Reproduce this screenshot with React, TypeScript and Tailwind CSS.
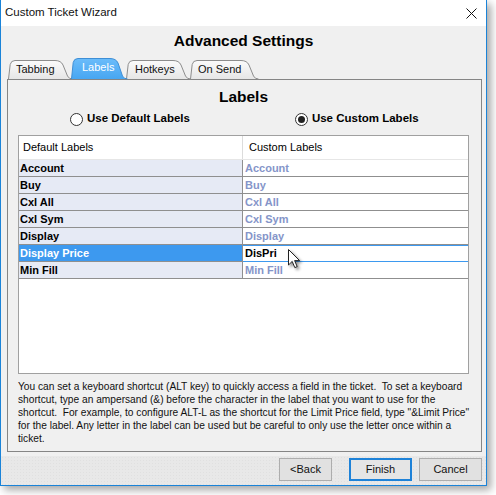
import React from "react";

type Row = { name: string; custom: string; selected?: boolean };

const rows: Row[] = [
  { name: "Account", custom: "Account" },
  { name: "Buy", custom: "Buy" },
  { name: "Cxl All", custom: "Cxl All" },
  { name: "Cxl Sym", custom: "Cxl Sym" },
  { name: "Display", custom: "Display" },
  { name: "Display Price", custom: "DisPri", selected: true },
  { name: "Min Fill", custom: "Min Fill" },
];

function Tab({ id, label, width, selected, pl, className = "" }: { id: string; label: string; width: number; selected?: boolean; pl: number; className?: string }) {
  const h = selected ? 21 : 19;
  const w = width;
  const d = `M0.5,${h} L2.2,4.5 Q3,0.5 7,0.5 L${w - 17},0.5 Q${w - 11},0.5 ${w - 9},5 L${w - 4.5},${h - 3} Q${w - 3},${h} ${w + 0.5},${h}`;
  return (
    <div className={`relative shrink-0 ${selected ? "z-10 h-[21px]" : "h-[19px]"} ${className}`} style={{ width: w }}>
      <svg className="absolute inset-0 overflow-visible" width={w} height={h}>
        <defs>
          <linearGradient id={`tabfill-${id}`} x1="0" y1="0" x2="0" y2="1">
            <stop offset="0" stopColor={selected ? "#6bbcfa" : "#fbfbfb"} />
            <stop offset="1" stopColor={selected ? "#47a6f2" : "#e6e6e6"} />
          </linearGradient>
        </defs>
        <path d={d} fill={`url(#tabfill-${id})`} stroke={selected ? "#3f8fd6" : "#8d8d8d"} strokeWidth="1" />
      </svg>
      <span
        className={`relative block text-[11px] leading-none ${selected ? "pt-[4px] text-white" : "pt-[4px] text-[#111]"}`}
        style={{ paddingLeft: pl }}
      >
        {label}
      </span>
    </div>
  );
}

function Radio({ checked }: { checked?: boolean }) {
  return (
    <span className="flex h-[13px] w-[13px] items-center justify-center rounded-full border border-[#333] bg-white">
      {checked ? <span className="h-[7px] w-[7px] rounded-full bg-[#222]" /> : null}
    </span>
  );
}

export default function App() {
  return (
    <div className="h-[495px] w-[496px] bg-white font-['Liberation_Sans',Arial,sans-serif] text-black">
      <div className="flex h-[486px] w-[487px] flex-col border-x border-b border-[#1a83d8] bg-[#f0f0f0] shadow-[4px_4px_8px_rgba(0,0,0,0.35)]">
        {/* title bar */}
        <div className="flex h-[26px] items-center justify-between bg-white pl-[4px] pr-[8px]">
          <span className="text-[11.5px] text-[#111]">Custom Ticket Wizard</span>
          <svg width="11" height="11" viewBox="0 0 11 11" className="mr-[1px]">
            <path d="M0.5 0.5 L10.5 10.5 M10.5 0.5 L0.5 10.5" stroke="#111" strokeWidth="1" />
          </svg>
        </div>

        <div className="flex h-[32px] items-center justify-center pb-[3px] text-[15.5px] font-bold">Advanced Settings</div>

        {/* tabs */}
        <div className="flex h-[21px] items-end pl-[7px]">
          <Tab id="tabbing" label="Tabbing" width={64} pl={8} />
          <Tab id="labels" label="Labels" width={56} pl={11} selected className="ml-[-1px]" />
          <Tab id="hotkeys" label="Hotkeys" width={64} pl={9} className="ml-[-1px]" />
          <Tab id="onsend" label="On Send" width={68} pl={8} />
        </div>

        {/* panel */}
        <div className="ml-[6px] flex h-[373px] w-[475px] flex-col border border-[#858585] pl-[10px] pr-[12px]">
          <div className="flex h-[24px] items-end justify-center text-[15.5px] font-bold leading-none">Labels</div>
          <div className="mt-[4px] flex h-[22px] items-center text-[11.5px] font-bold">
            <div className="ml-[52px] flex items-center gap-[4px]">
              <Radio />
              <span>Use Default Labels</span>
            </div>
            <div className="ml-[105px] flex items-center gap-[4px]">
              <Radio checked />
              <span>Use Custom Labels</span>
            </div>
          </div>

          {/* table */}
          <div className="relative mt-[5px] h-[239px] w-[451px] border border-[#a0a0a0] bg-white">
            <div className="flex h-[24px] border-b border-[#e6e6e6] text-[11px]">
              <div className="flex w-[224px] items-center border-r border-[#dcdcdc] pl-[4px]">Default Labels</div>
              <div className="flex flex-1 items-center pl-[6px]">Custom Labels</div>
            </div>
            {rows.map((r) => (
              <div key={r.name} className="flex h-[17px] text-[11px] font-bold leading-[16px]">
                <div
                  className={`w-[224px] border-r border-b border-[#8f8f8f] pl-[1px] ${
                    r.selected ? "bg-[#3d99ef] text-white" : "bg-[#e6eaf5] text-black"
                  }`}
                >
                  {r.name}
                </div>
                <div
                  className={`flex-1 border-b pl-[2px] ${
                    r.selected
                      ? "border-[#3d99ef] text-black shadow-[inset_0_1px_0_#3d99ef]"
                      : "border-[#8f8f8f] text-[#8595c9]"
                  }`}
                >
                  {r.custom}
                </div>
              </div>
            ))}
            {/* mouse pointer */}
            <svg
              className="absolute left-[269px] top-[113px] drop-shadow-[2px_2px_1.5px_rgba(0,0,0,0.45)]"
              width="14"
              height="21"
              viewBox="0 0 14 21"
            >
              <path d="M0.5 0.5 L0.5 16 L4.2 12.4 L6.8 18.6 L9.2 17.6 L6.6 11.6 L11.6 11.6 Z" fill="#fff" stroke="#222" strokeWidth="1" strokeLinejoin="round" />
            </svg>
          </div>

          <div className="mt-[6px] text-[10.2px] leading-[13px] text-[#111]">
            <div className="whitespace-nowrap">You can set a keyboard shortcut (ALT key) to quickly access a field in the ticket.&nbsp; To set a keyboard</div>
            <div className="whitespace-nowrap">shortcut, type an ampersand (&amp;) before the character in the label that you want to use for the</div>
            <div className="whitespace-nowrap">shortcut.&nbsp; For example, to configure ALT-L as the shortcut for the Limit Price field, type "&amp;Limit Price"</div>
            <div className="whitespace-nowrap">for the label. Any letter in the label can be used but be careful to only use the letter once within a</div>
            <div className="whitespace-nowrap">ticket.</div>
          </div>
        </div>

        {/* footer */}
        <div className="mt-[4px] flex flex-1 items-start justify-end bg-[#e8e8e8] bg-[radial-gradient(#e0e0e0_0.6px,transparent_0.7px)] bg-[length:3px_3px] pr-[4px] pt-[2px] text-[11px]">
          <button className="h-[23px] w-[53px] border border-[#adadad] bg-[#e1e1e1] text-[#111]">&lt;Back</button>
          <button className="ml-[17px] h-[23px] w-[63px] border-2 border-[#1e82d8] bg-[#e5e5e5] text-[#111]">Finish</button>
          <button className="ml-[7px] h-[23px] w-[63px] border border-[#adadad] bg-[#e1e1e1] text-[#111]">Cancel</button>
        </div>
      </div>
    </div>
  );
}
